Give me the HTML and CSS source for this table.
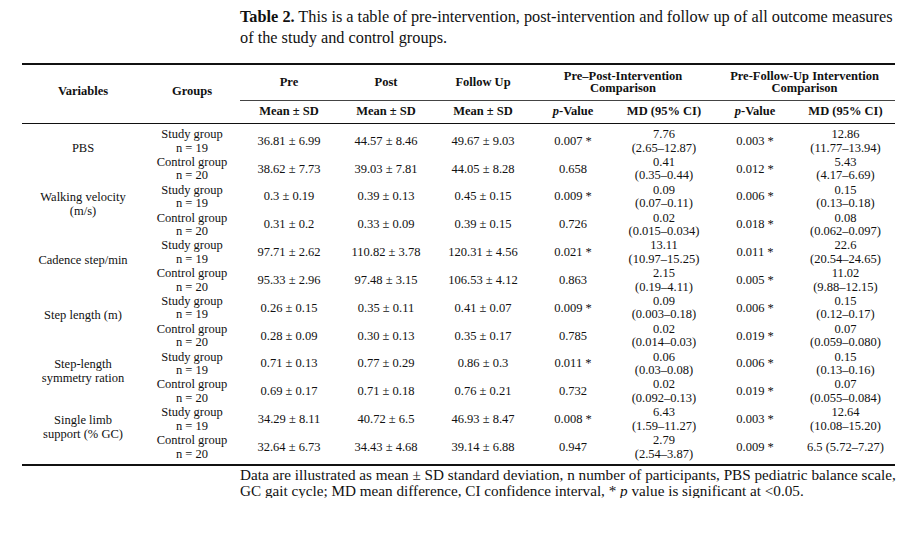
FILE: index.html
```html
<!DOCTYPE html>
<html lang="en">
<head>
<meta charset="utf-8">
<title>Table 2</title>
<link rel="stylesheet" href="styles.css">
</head>
<body>
<div class="page">
  <p class="caption"><b>Table 2.</b> This is a table of pre-intervention, post-intervention and follow up of all outcome measures<br>of the study and control groups.</p>
  <table class="data">
    <colgroup>
      <col class="c-var"><col class="c-grp"><col class="c-m"><col class="c-m2"><col class="c-m"><col class="c-p"><col class="c-md"><col class="c-p"><col class="c-md2">
    </colgroup>
    <thead>
      <tr class="h1">
        <th rowspan="2" class="hs">Variables</th>
        <th rowspan="2" class="hs">Groups</th>
        <th>Pre</th>
        <th>Post</th>
        <th>Follow Up</th>
        <th colspan="2">Pre–Post-Intervention<br>Comparison</th>
        <th colspan="2">Pre-Follow-Up Intervention<br>Comparison</th>
      </tr>
      <tr class="h2">
        <th>Mean ± SD</th>
        <th>Mean ± SD</th>
        <th>Mean ± SD</th>
        <th><i>p</i>-Value</th>
        <th>MD (95% CI)</th>
        <th><i>p</i>-Value</th>
        <th>MD (95% CI)</th>
      </tr>
    </thead>
    <tbody>
      <tr class="first">
        <td rowspan="2" class="var">PBS</td>
        <td>Study group<br>n = 19</td>
        <td>36.81 ± 6.99</td><td>44.57 ± 8.46</td><td>49.67 ± 9.03</td>
        <td>0.007 *</td><td>7.76<br>(2.65–12.87)</td><td>0.003 *</td><td>12.86<br>(11.77–13.94)</td>
      </tr>
      <tr>
        <td>Control group<br>n = 20</td>
        <td>38.62 ± 7.73</td><td>39.03 ± 7.81</td><td>44.05 ± 8.28</td>
        <td>0.658</td><td>0.41<br>(0.35–0.44)</td><td>0.012 *</td><td>5.43<br>(4.17–6.69)</td>
      </tr>
      <tr>
        <td rowspan="2" class="var">Walking velocity<br>(m/s)</td>
        <td>Study group<br>n = 19</td>
        <td>0.3 ± 0.19</td><td>0.39 ± 0.13</td><td>0.45 ± 0.15</td>
        <td>0.009 *</td><td>0.09<br>(0.07–0.11)</td><td>0.006 *</td><td>0.15<br>(0.13–0.18)</td>
      </tr>
      <tr>
        <td>Control group<br>n = 20</td>
        <td>0.31 ± 0.2</td><td>0.33 ± 0.09</td><td>0.39 ± 0.15</td>
        <td>0.726</td><td>0.02<br>(0.015–0.034)</td><td>0.018 *</td><td>0.08<br>(0.062–0.097)</td>
      </tr>
      <tr>
        <td rowspan="2" class="var">Cadence step/min</td>
        <td>Study group<br>n = 19</td>
        <td>97.71 ± 2.62</td><td>110.82 ± 3.78</td><td>120.31 ± 4.56</td>
        <td>0.021 *</td><td>13.11<br>(10.97–15.25)</td><td>0.011 *</td><td>22.6<br>(20.54–24.65)</td>
      </tr>
      <tr>
        <td>Control group<br>n = 20</td>
        <td>95.33 ± 2.96</td><td>97.48 ± 3.15</td><td>106.53 ± 4.12</td>
        <td>0.863</td><td>2.15<br>(0.19–4.11)</td><td>0.005 *</td><td>11.02<br>(9.88–12.15)</td>
      </tr>
      <tr>
        <td rowspan="2" class="var">Step length (m)</td>
        <td>Study group<br>n = 19</td>
        <td>0.26 ± 0.15</td><td>0.35 ± 0.11</td><td>0.41 ± 0.07</td>
        <td>0.009 *</td><td>0.09<br>(0.003–0.18)</td><td>0.006 *</td><td>0.15<br>(0.12–0.17)</td>
      </tr>
      <tr>
        <td>Control group<br>n = 20</td>
        <td>0.28 ± 0.09</td><td>0.30 ± 0.13</td><td>0.35 ± 0.17</td>
        <td>0.785</td><td>0.02<br>(0.014–0.03)</td><td>0.019 *</td><td>0.07<br>(0.059–0.080)</td>
      </tr>
      <tr>
        <td rowspan="2" class="var">Step-length<br>symmetry ration</td>
        <td>Study group<br>n = 19</td>
        <td>0.71 ± 0.13</td><td>0.77 ± 0.29</td><td>0.86 ± 0.3</td>
        <td>0.011 *</td><td>0.06<br>(0.03–0.08)</td><td>0.006 *</td><td>0.15<br>(0.13–0.16)</td>
      </tr>
      <tr>
        <td>Control group<br>n = 20</td>
        <td>0.69 ± 0.17</td><td>0.71 ± 0.18</td><td>0.76 ± 0.21</td>
        <td>0.732</td><td>0.02<br>(0.092–0.13)</td><td>0.019 *</td><td>0.07<br>(0.055–0.084)</td>
      </tr>
      <tr>
        <td rowspan="2" class="var var-last">Single limb<br>support (% GC)</td>
        <td>Study group<br>n = 19</td>
        <td>34.29 ± 8.11</td><td>40.72 ± 6.5</td><td>46.93 ± 8.47</td>
        <td>0.008 *</td><td>6.43<br>(1.59–11.27)</td><td>0.003 *</td><td>12.64<br>(10.08–15.20)</td>
      </tr>
      <tr class="last">
        <td>Control group<br>n = 20</td>
        <td>32.64 ± 6.73</td><td>34.43 ± 4.68</td><td>39.14 ± 6.88</td>
        <td>0.947</td><td>2.79<br>(2.54–3.87)</td><td>0.009 *</td><td>6.5 (5.72–7.27)</td>
      </tr>
    </tbody>
  </table>
  <p class="note">Data are illustrated as mean ± SD standard deviation, n number of participants, PBS pediatric balance scale,<br>GC gait cycle; MD mean difference, CI confidence interval, * <i>p</i> value is significant at &lt;0.05.</p>
</div>
</body>
</html>
```

FILE: styles.css
```css
html, body {
  margin: 0;
  background: #ffffff;
}

body {
  color: #111111;
  font-family: "Liberation Serif", "Times New Roman", serif;
}

.page {
  padding: 6px 27px 0 22px;
}

.caption {
  margin: 0 0 0 218px;
  width: 690px;
  font-size: 16.3px;
  line-height: 21px;
}

.data {
  margin-top: 15px;
  width: 873px;
  table-layout: fixed;
  border-collapse: separate;
  border-spacing: 0;
  border-top: 2px solid #111111;
  border-bottom: 2px solid #111111;
  font-size: 12.5px;
}

.c-var { width: 122px; }
.c-grp { width: 96px; }
.c-m { width: 98px; }
.c-m2 { width: 96px; }
.c-p { width: 82px; }
.c-md { width: 100px; }
.c-md2 { width: 99px; }

th {
  font-weight: bold;
  text-align: center;
  vertical-align: middle;
  padding: 0;
}

.h1 th {
  line-height: 12.6px;
  padding: 4.9px 0;
  border-bottom: 1px solid #444444;
}

.h1 th.hs {
  padding: 0 0 6px;
  border-bottom: 1px solid #111111;
}

.h2 th {
  line-height: 13.4px;
  padding: 4.3px 0;
  border-bottom: 1px solid #111111;
}

td {
  text-align: center;
  vertical-align: middle;
  line-height: 13.4px;
  padding: 0.5px 0;
}

td.var {
  line-height: 14px;
  padding-bottom: 14.5px;
}

td.var-last {
  padding-bottom: 17px;
}

tr.first td {
  padding-top: 4.2px;
}

tr.last td {
  padding-bottom: 3.3px;
}

.note {
  margin: 1px 0 0 218px;
  width: 690px;
  font-size: 15.2px;
  line-height: 15.5px;
}
```
